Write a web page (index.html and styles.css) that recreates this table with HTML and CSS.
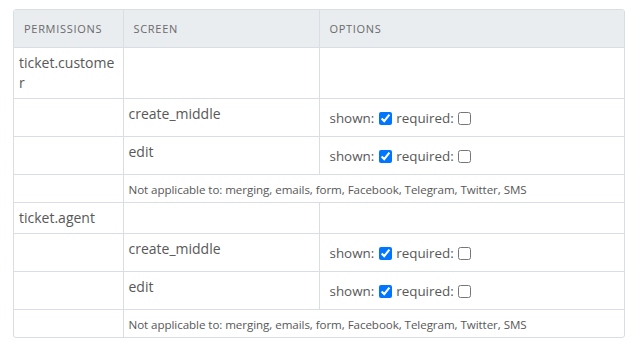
FILE: index.html
```html
<!DOCTYPE html>
<html>
<head>
<meta charset="utf-8">
<link rel="stylesheet" href="styles.css">
</head>
<body>
<div class="frame">
  <table class="perm">
    <colgroup>
      <col class="c1"><col class="c2"><col class="c3">
    </colgroup>
    <thead>
      <tr><th>Permissions</th><th>Screen</th><th>Options</th></tr>
    </thead>
    <tbody>
      <tr class="group"><td class="name">ticket.customer</td><td></td><td></td></tr>
      <tr class="opt"><td></td><td class="screen">create_middle</td><td class="options">shown: <input type="checkbox" checked> required: <input type="checkbox"></td></tr>
      <tr class="opt"><td></td><td class="screen">edit</td><td class="options">shown: <input type="checkbox" checked> required: <input type="checkbox"></td></tr>
      <tr class="note"><td></td><td colspan="2">Not applicable to: merging, emails, form, Facebook, Telegram, Twitter, SMS</td></tr>
      <tr class="group"><td class="name">ticket.agent</td><td></td><td></td></tr>
      <tr class="opt"><td></td><td class="screen">create_middle</td><td class="options">shown: <input type="checkbox" checked> required: <input type="checkbox"></td></tr>
      <tr class="opt"><td></td><td class="screen">edit</td><td class="options">shown: <input type="checkbox" checked> required: <input type="checkbox"></td></tr>
      <tr class="note"><td></td><td colspan="2">Not applicable to: merging, emails, form, Facebook, Telegram, Twitter, SMS</td></tr>
    </tbody>
  </table>
</div>
</body>
</html>
```
FILE: styles.css
```css
html, body {
  margin: 0;
  padding: 0;
  background: #fff;
}
body {
  padding: 9px 17px 0 13px;
  font-family: "Open Sans", "Noto Sans", sans-serif;
  color: #585858;
}
.frame {
  width: 610px;
  border: 1px solid #d8dee3;
  border-radius: 3px;
  overflow: hidden;
}
.perm {
  width: 100%;
  border-collapse: collapse;
  table-layout: fixed;
}
.c1 { width: 109px; }
.c2 { width: 196px; }
.c3 { width: auto; }
.perm th, .perm td {
  border: 1px solid #d8dee3;
  vertical-align: top;
  text-align: left;
}
.perm tr > :first-child { border-left: none; }
.perm tr > :last-child { border-right: none; }
.perm thead th { border-top: none; }
.perm tbody tr:last-child td { border-bottom: none; }
.perm th {
  background: #e9edf0;
  color: #6a6a6a;
  font-weight: 400;
  font-size: 11px;
  letter-spacing: 0.7px;
  text-transform: uppercase;
  height: 37px;
  box-sizing: border-box;
  padding: 0 10px;
  line-height: 37px;
  vertical-align: middle;
}
.perm td {
  font-size: 14px;
  line-height: 20px;
  padding: 5px 5px;
}
.name {
  word-break: break-all;
}
.options {
  padding: 8px 10px 7px !important;
  line-height: 22px !important;
  font-size: 13.4px !important;
}
.options input {
  margin: 0 1px;
  width: 13px;
  height: 13px;
  vertical-align: -2px;
}
.note td {
  font-size: 11.6px;
  letter-spacing: -0.07px;
  line-height: 17px;
  padding: 6px 5px 4px;
}
```
